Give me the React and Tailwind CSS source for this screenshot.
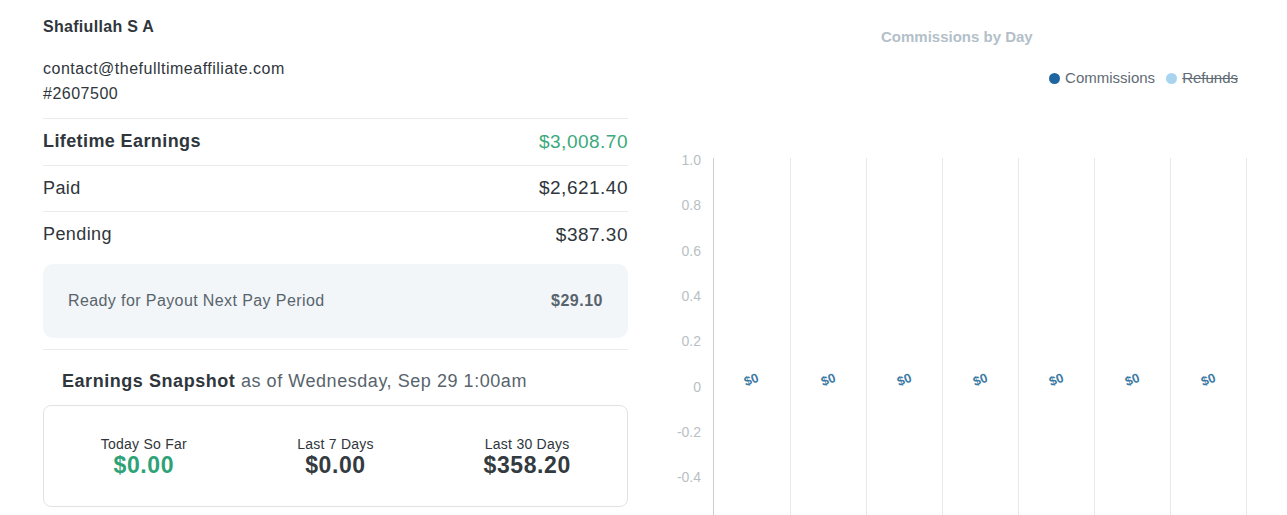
import React from "react";

const font = { fontFamily: '"Liberation Sans", Arial, sans-serif' };

function Row({ label, value, bold, green, border = true }) {
  return (
    <div className={`flex items-center justify-between h-[46.5px] ${border ? "border-t border-[#e8ecef]" : ""}`}>
      <span className={`text-[18px] tracking-[0.4px] text-[#2f363c] ${bold ? "font-semibold" : ""}`}>{label}</span>
      <span className={`text-[19px] tracking-[0.5px] ${green ? "text-[#3aa97c]" : "text-[#2f363c]"}`}>{value}</span>
    </div>
  );
}

function Stat({ label, value, green }) {
  return (
    <div className="flex flex-col items-center">
      <span className="text-[14px] tracking-[0.25px] text-[#2f363c] leading-[18px]">{label}</span>
      <span className={`text-[23px] tracking-[0.6px] font-bold leading-[24px] ${green ? "text-[#2ea277]" : "text-[#333a40]"}`}>{value}</span>
    </div>
  );
}

function Chart() {
  const grid = [73, 150, 226, 302, 378, 454, 530, 606];
  const yl = ["1.0", "0.8", "0.6", "0.4", "0.2", "0", "-0.2", "-0.4"];
  return (
    <svg width="647" height="375" className="block">
      {grid.map((x, i) => (
        <line key={x} x1={x + 0.5} x2={x + 0.5} y1={8} y2={375} stroke={i === 0 ? "#c9ced2" : "#e6e8ea"} strokeWidth="1" />
      ))}
      {yl.map((t, i) => (
        <text key={t} x={61} y={10 + i * 45.3 + 5} textAnchor="end" fontSize="14" fill="#b7bfc5" fontFamily="Liberation Sans, Arial, sans-serif">{t}</text>
      ))}
      {grid.slice(0, 7).map((x) => {
        const cx = x + 38;
        return (
          <text key={"l" + x} x={cx} y={234} textAnchor="middle" fontSize="13" fontWeight="bold" fill="#3b7aa3" fontFamily="Liberation Sans, Arial, sans-serif" transform={`rotate(-20 ${cx} 229)`}>$0</text>
        );
      })}
    </svg>
  );
}

export default function App() {
  return (
    <div className="flex w-[1287px] h-[515px] overflow-hidden bg-white" style={font}>
      <div className="w-[585px] ml-[43px] shrink-0">
        <div className="pt-[18px] text-[16px] tracking-[0.3px] leading-[18px] font-bold text-[#2f363c]">Shafiullah S A</div>
        <div className="mt-[20px] text-[16px] tracking-[0.5px] leading-[25px] text-[#2f363c]">
          <div>contact@thefulltimeaffiliate.com</div>
          <div>#2607500</div>
        </div>
        <div className="mt-[12px]">
          <Row label="Lifetime Earnings" value="$3,008.70" bold green />
          <Row label="Paid" value="$2,621.40" />
          <Row label="Pending" value="$387.30" />
        </div>
        <div className="mt-[6px] h-[74px] rounded-[10px] bg-[#f3f6f8] flex items-center justify-between px-[25px]">
          <span className="text-[16px] tracking-[0.4px] text-[#58646d]">Ready for Payout Next Pay Period</span>
          <span className="text-[16px] tracking-[0.5px] font-bold text-[#58646d]">$29.10</span>
        </div>
        <div className="mt-[11px] border-t border-[#e8ecef]"></div>
        <div className="mt-[20px] pl-[19px] text-[18px] tracking-[0.55px] leading-[22px] text-[#58646d]">
          <span className="font-semibold text-[#2f363c]">Earnings Snapshot</span> as of Wednesday, Sep 29 1:00am
        </div>
        <div className="mt-[13px] h-[102px] rounded-[8px] border border-[#dfe3e6] grid grid-cols-3 items-center px-[4px]">
          <Stat label="Today So Far" value="$0.00" green />
          <Stat label="Last 7 Days" value="$0.00" />
          <Stat label="Last 30 Days" value="$358.20" />
        </div>
      </div>
      <div className="ml-[12px] w-[647px] shrink-0 flex flex-col">
        <div className="pt-[28px] pl-[241px] text-[15px] leading-[18px] font-bold text-[#b3c0c9]">Commissions by Day</div>
        <div className="mt-[23px] flex items-center justify-end pr-[49px] text-[15px] leading-[18px]">
          <span className="w-[11px] h-[11px] rounded-full bg-[#1f66a0] mr-[5px]"></span>
          <span className="text-[#5f6b74]">Commissions</span>
          <span className="w-[11px] h-[11px] rounded-full bg-[#a9d3ef] ml-[11px] mr-[5px]"></span>
          <span className="text-[#5f6b74] line-through">Refunds</span>
        </div>
        <div className="mt-[63px]">
          <Chart />
        </div>
      </div>
    </div>
  );
}
